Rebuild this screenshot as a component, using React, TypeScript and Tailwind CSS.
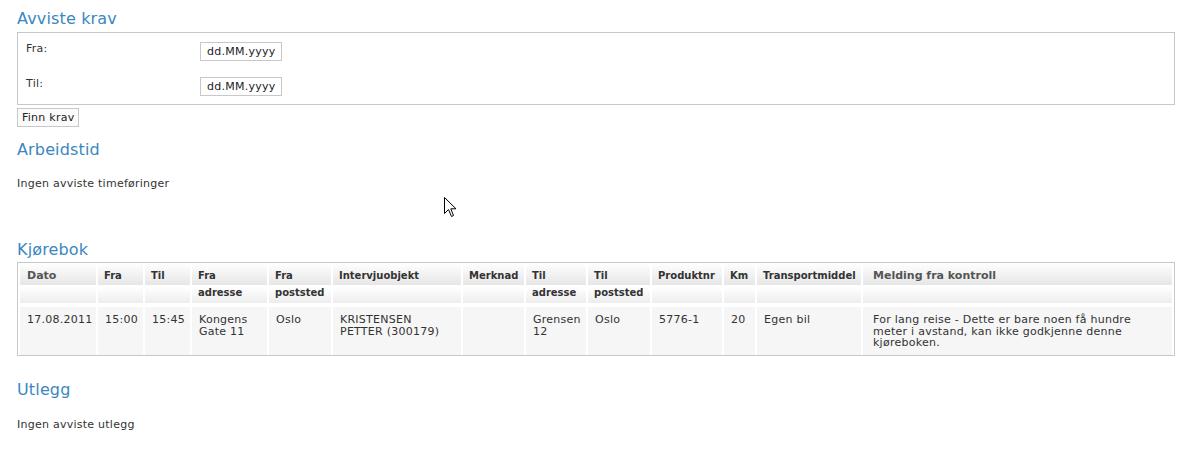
import React from "react";

const font = "font-['DejaVu_Sans',Verdana,sans-serif]";

function Heading({ children, className = "" }: { children: React.ReactNode; className?: string }) {
  return (
    <h2 className={`text-[16px] leading-[20px] font-normal tracking-[0.15px] text-[#3a87c0] ${className}`}>
      {children}
    </h2>
  );
}

const thBase =
  "align-top text-left font-bold pt-[4px] pb-[2px] border-b-[4px] border-white bg-[linear-gradient(#ffffff,#e6e6e6_22px,#ffffff_22px,#ffffff_24px)] bg-[length:100%_24px] bg-repeat leading-[17px]";
const thSmall = `${thBase} text-[10px] text-[#333333] px-[6px]`;
const thBig = `${thBase} text-[11px] text-[#555555] px-[7px]`;
const td =
  "align-top text-[11px] leading-[11.5px] tracking-[0.25px] text-[#333333] bg-[#f6f6f6] pt-[7px] pb-[5px] px-[7px]";
const txt = "text-[11px] leading-[13px] tracking-[0.25px]";

export default function App() {
  return (
    <div className={`relative min-h-[450px] bg-white ${font} text-[#333333]`}>
      <div className="pl-[17px] pt-[9px] w-[1175px]">
        <Heading>Avviste krav</Heading>
        <div className="mt-[3px] w-[1158px] border border-[#c8c8c8] pt-[9px] pb-[8px] pl-[8px] flex flex-col gap-[16px]">
          <div className="flex items-start">
            <div className={`w-[174px] ${txt}`}>Fra:</div>
            <input
              readOnly
              defaultValue="dd.MM.yyyy"
              className="w-[82px] h-[19px] border border-[#c8c8c8] bg-white px-[6px] text-[11px] tracking-[0.25px] text-[#222222] outline-none"
            />
          </div>
          <div className="flex items-start">
            <div className={`w-[174px] ${txt}`}>Til:</div>
            <input
              readOnly
              defaultValue="dd.MM.yyyy"
              className="w-[82px] h-[19px] border border-[#c8c8c8] bg-white px-[6px] text-[11px] tracking-[0.25px] text-[#222222] outline-none"
            />
          </div>
        </div>
        <button
          className={`mt-[3px] h-[19px] border border-[#c8c8c8] bg-[#fbfbfb] px-[4px] ${txt} text-[#222222] block`}
        >
          Finn krav
        </button>

        <Heading className="mt-[13px]">Arbeidstid</Heading>
        <p className={`mt-[17px] ${txt}`}>Ingen avviste timeføringer</p>

        <Heading className="mt-[50px]">Kjørebok</Heading>
        <table className="mt-[2px] w-[1158px] table-fixed border-separate border-spacing-x-[2px] border-spacing-y-0 border border-[#c8c8c8]">
          <colgroup>
            <col className="w-[76px]" />
            <col className="w-[45px]" />
            <col className="w-[45px]" />
            <col className="w-[75px]" />
            <col className="w-[62px]" />
            <col className="w-[128px]" />
            <col className="w-[61px]" />
            <col className="w-[60px]" />
            <col className="w-[62px]" />
            <col className="w-[70px]" />
            <col className="w-[31px]" />
            <col className="w-[104px]" />
            <col className="w-[309px]" />
          </colgroup>
          <thead>
            <tr>
              <th className={thBig}>Dato</th>
              <th className={thSmall}>Fra</th>
              <th className={thSmall}>Til</th>
              <th className={thSmall}>
                Fra
                <br />
                adresse
              </th>
              <th className={thSmall}>
                Fra
                <br />
                poststed
              </th>
              <th className={thSmall}>Intervjuobjekt</th>
              <th className={thSmall}>Merknad</th>
              <th className={thSmall}>
                Til
                <br />
                adresse
              </th>
              <th className={thSmall}>
                Til
                <br />
                poststed
              </th>
              <th className={thSmall}>Produktnr</th>
              <th className={thSmall}>Km</th>
              <th className={thSmall}>Transportmiddel</th>
              <th className={`${thBig} pl-[10px]`}>Melding fra kontroll</th>
            </tr>
          </thead>
          <tbody>
            <tr>
              <td className={td}>17.08.2011</td>
              <td className={td}>15:00</td>
              <td className={td}>15:45</td>
              <td className={td}>
                Kongens
                <br />
                Gate 11
              </td>
              <td className={td}>Oslo</td>
              <td className={td}>
                KRISTENSEN
                <br />
                PETTER (300179)
              </td>
              <td className={td}></td>
              <td className={td}>
                Grensen
                <br />
                12
              </td>
              <td className={td}>Oslo</td>
              <td className={td}>5776-1</td>
              <td className={td}>20</td>
              <td className={td}>Egen bil</td>
              <td className={`${td} pl-[10px] pb-[6px]`}>
                For lang reise - Dette er bare noen få hundre
                <br />
                meter i avstand, kan ikke godkjenne denne
                <br />
                kjøreboken.
              </td>
            </tr>
          </tbody>
        </table>

        <Heading className="mt-[24px]">Utlegg</Heading>
        <p className={`mt-[18px] ${txt}`}>Ingen avviste utlegg</p>
      </div>

      <svg
        className="absolute left-[444px] top-[197px]"
        width="13"
        height="21"
        viewBox="0 0 13 21"
        aria-hidden="true"
      >
        <path
          d="M0.5 0.5 L0.5 16.5 L4.5 12.5 L7.5 19.5 L9.5 18.5 L6.8 11.8 L12 11.8 Z"
          fill="#ffffff"
          stroke="#000000"
          strokeWidth="1"
          strokeLinejoin="miter"
        />
      </svg>
    </div>
  );
}
